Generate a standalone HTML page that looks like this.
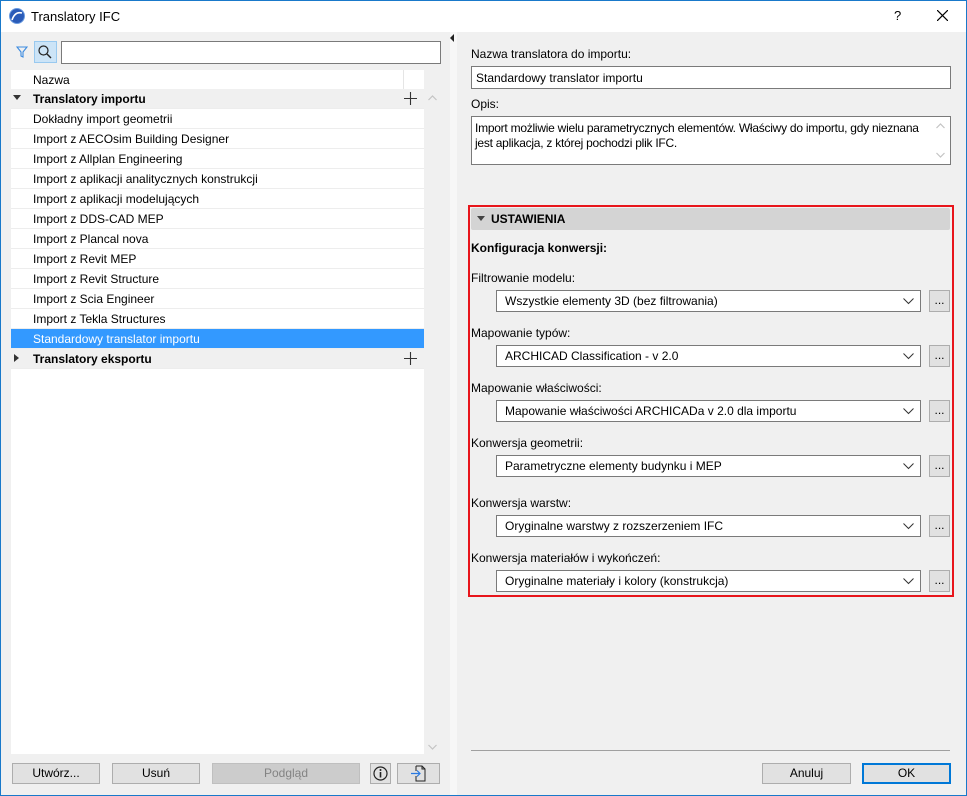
<!DOCTYPE html>
<html><head><meta charset="utf-8"><style>
*{box-sizing:border-box;margin:0;padding:0}
body{width:967px;height:796px;background:#f0f0f0;font-family:"Liberation Sans",sans-serif;font-size:12px;color:#000;position:relative;overflow:hidden}
.a{position:absolute}
.win{left:0;top:0;width:967px;height:796px;border:1px solid #1979ca;}
.title{left:1px;top:1px;width:965px;height:31px;background:#fff}
.list{left:11px;top:70px;width:413px;height:684px;background:#fff}
.row{position:absolute;left:0;width:413px;height:20px;line-height:20px;padding-left:22px;border-bottom:1px solid #ededed;white-space:nowrap}
.grp{background:#f0f0f0;font-weight:bold}
.sel{background:#3399ff;color:#fff}
.btn{position:absolute;height:21px;background:#e1e1e1;border:1px solid #adadad;text-align:center;line-height:19px}
.inp{position:absolute;background:#fff;border:1px solid #7a7a7a}
.lbl{position:absolute;white-space:nowrap}
.combo{position:absolute;left:496px;width:425px;height:22px;background:#fff;border:1px solid #7a7a7a;padding-left:8px;line-height:21px}
.combo svg{position:absolute;right:6px;top:7px}
.dots{position:absolute;left:929px;width:21px;height:22px;background:#e1e1e1;border:1px solid #adadad;text-align:center;line-height:18px}
</style></head><body>
<div class="a title"></div>
<svg class="a" style="left:9px;top:8px" width="16" height="16" viewBox="0 0 16 16"><circle cx="8" cy="8" r="7.5" fill="#2a5bb8"/><path d="M3 12 Q6 3 13 5" stroke="#fff" stroke-width="1.6" fill="none"/><circle cx="8" cy="8" r="7.5" fill="none" stroke="#6a9be0" stroke-width="1"/></svg>
<div class="lbl" style="left:31px;top:9px;font-size:13px">Translatory IFC</div>
<div class="lbl" style="left:894px;top:8px;font-size:13px">?</div>
<svg class="a" style="left:937px;top:10px" width="11" height="11"><path d="M0 0L11 11M11 0L0 11" stroke="#000" stroke-width="1.2"/></svg>

<svg class="a" style="left:16px;top:46px" width="12" height="12"><path d="M1 1H11L7 6V11L5 10V6Z" fill="none" stroke="#3c8be0" stroke-width="1.1"/></svg>
<div class="a" style="left:34px;top:41px;width:23px;height:22px;background:#cce4f7;border:1px solid #99c9ef"></div>
<svg class="a" style="left:37px;top:44px" width="16" height="16"><circle cx="6.5" cy="6.5" r="4.5" fill="none" stroke="#222" stroke-width="1.2"/><path d="M10 10L14 14" stroke="#222" stroke-width="1.4"/></svg>
<div class="inp" style="left:61px;top:41px;width:380px;height:23px"></div>

<div class="a list">
<div class="row" style="top:0;border-bottom:none">Nazwa</div>
<div class="a" style="left:392px;top:0;width:1px;height:19px;background:#e5e5e5"></div>
<div class="row grp" style="top:19px">Translatory importu</div>
<div class="row" style="top:39px">Dokładny import geometrii</div>
<div class="row" style="top:59px">Import z AECOsim Building Designer</div>
<div class="row" style="top:79px">Import z Allplan Engineering</div>
<div class="row" style="top:99px">Import z aplikacji analitycznych konstrukcji</div>
<div class="row" style="top:119px">Import z aplikacji modelujących</div>
<div class="row" style="top:139px">Import z DDS-CAD MEP</div>
<div class="row" style="top:159px">Import z Plancal nova</div>
<div class="row" style="top:179px">Import z Revit MEP</div>
<div class="row" style="top:199px">Import z Revit Structure</div>
<div class="row" style="top:219px">Import z Scia Engineer</div>
<div class="row" style="top:239px">Import z Tekla Structures</div>
<div class="row sel" style="top:259px">Standardowy translator importu</div>
<div class="row grp" style="top:279px">Translatory eksportu</div>
</div>
<svg class="a" style="left:13px;top:95px" width="8" height="6"><path d="M0 0H8L4 5Z" fill="#333"/></svg>
<svg class="a" style="left:14px;top:354px" width="6" height="8"><path d="M0 0V8L5 4Z" fill="#333"/></svg>
<svg class="a" style="left:404px;top:92px" width="13" height="13"><path d="M6.5 0V13M0 6.5H13" stroke="#333" stroke-width="1.1"/></svg>
<svg class="a" style="left:404px;top:352px" width="13" height="13"><path d="M6.5 0V13M0 6.5H13" stroke="#333" stroke-width="1.1"/></svg>
<svg class="a" style="left:428px;top:95px" width="9" height="6"><path d="M0.5 5L4.5 1L8.5 5" fill="none" stroke="#c4c4c4" stroke-width="1.2"/></svg>
<svg class="a" style="left:428px;top:744px" width="9" height="6"><path d="M0.5 1L4.5 5L8.5 1" fill="none" stroke="#c4c4c4" stroke-width="1.2"/></svg>

<div class="btn" style="left:12px;top:763px;width:88px">Utwórz...</div>
<div class="btn" style="left:112px;top:763px;width:88px">Usuń</div>
<div class="btn" style="left:212px;top:763px;width:148px;background:#cccccc;border-color:#bfbfbf;color:#838383">Podgląd</div>
<div class="btn" style="left:370px;top:763px;width:21px"></div>
<svg class="a" style="left:373px;top:766px" width="15" height="15"><circle cx="7.5" cy="7.5" r="6.5" fill="none" stroke="#222" stroke-width="1.2"/><path d="M7.5 6V11.5" stroke="#222" stroke-width="1.6"/><circle cx="7.5" cy="4" r="1" fill="#222"/></svg>
<div class="btn" style="left:397px;top:763px;width:43px"></div>
<svg class="a" style="left:410px;top:765px" width="18" height="17"><path d="M6 1H12L15 4V16H6V11M6 6V1" fill="none" stroke="#222"/><path d="M12 1V4H15" fill="none" stroke="#222"/><path d="M1 8.5H10M7 5.5L10 8.5L7 11.5" fill="none" stroke="#2a7ae2" stroke-width="1.2"/></svg>

<div class="a" style="left:450px;top:32px;width:7px;height:763px;background:#f7f7f7"></div>
<svg class="a" style="left:450px;top:34px" width="5" height="8"><path d="M4 0V8L0 4Z" fill="#222"/></svg>

<div class="lbl" style="left:471px;top:47px">Nazwa translatora do importu:</div>
<div class="inp" style="left:471px;top:66px;width:480px;height:23px;padding-left:4px;line-height:22px">Standardowy translator importu</div>
<div class="lbl" style="left:471px;top:97px">Opis:</div>
<div class="inp" style="left:471px;top:116px;width:480px;height:49px;padding:4px 12px 0 3px;line-height:15px;letter-spacing:-0.25px">Import możliwie wielu parametrycznych elementów. Właściwy do importu, gdy nieznana jest aplikacja, z której pochodzi plik IFC.</div>
<svg class="a" style="left:936px;top:123px" width="9" height="6"><path d="M0.5 5L4.5 1L8.5 5" fill="none" stroke="#c4c4c4" stroke-width="1.2"/></svg>
<svg class="a" style="left:936px;top:152px" width="9" height="6"><path d="M0.5 1L4.5 5L8.5 1" fill="none" stroke="#c4c4c4" stroke-width="1.2"/></svg>

<div class="a" style="left:468px;top:205px;width:486px;height:392px;border:2px solid #e8151b"></div>
<div class="a" style="left:471px;top:208px;width:479px;height:22px;background:#d4d4d4;border-radius:2px"></div>
<svg class="a" style="left:477px;top:216px" width="8" height="5"><path d="M0 0H8L4 5Z" fill="#444"/></svg>
<div class="lbl" style="left:491px;top:212px;font-weight:bold">USTAWIENIA</div>
<div class="lbl" style="left:471px;top:241px;font-weight:bold">Konfiguracja konwersji:</div>

<div class="lbl" style="left:471px;top:271px">Filtrowanie modelu:</div>
<div class="combo" style="top:290px">Wszystkie elementy 3D (bez filtrowania)<svg width="11" height="7"><path d="M0.5 0.5L5.5 5.5L10.5 0.5" fill="none" stroke="#333"/></svg></div>
<div class="dots" style="top:290px">...</div>
<div class="lbl" style="left:471px;top:326px">Mapowanie typów:</div>
<div class="combo" style="top:345px">ARCHICAD Classification - v 2.0<svg width="11" height="7"><path d="M0.5 0.5L5.5 5.5L10.5 0.5" fill="none" stroke="#333"/></svg></div>
<div class="dots" style="top:345px">...</div>
<div class="lbl" style="left:471px;top:381px">Mapowanie właściwości:</div>
<div class="combo" style="top:400px">Mapowanie właściwości ARCHICADa v 2.0 dla importu<svg width="11" height="7"><path d="M0.5 0.5L5.5 5.5L10.5 0.5" fill="none" stroke="#333"/></svg></div>
<div class="dots" style="top:400px">...</div>
<div class="lbl" style="left:471px;top:436px">Konwersja geometrii:</div>
<div class="combo" style="top:455px">Parametryczne elementy budynku i MEP<svg width="11" height="7"><path d="M0.5 0.5L5.5 5.5L10.5 0.5" fill="none" stroke="#333"/></svg></div>
<div class="dots" style="top:455px">...</div>
<div class="lbl" style="left:471px;top:496px">Konwersja warstw:</div>
<div class="combo" style="top:515px">Oryginalne warstwy z rozszerzeniem IFC<svg width="11" height="7"><path d="M0.5 0.5L5.5 5.5L10.5 0.5" fill="none" stroke="#333"/></svg></div>
<div class="dots" style="top:515px">...</div>
<div class="lbl" style="left:471px;top:551px">Konwersja materiałów i wykończeń:</div>
<div class="combo" style="top:570px">Oryginalne materiały i kolory (konstrukcja)<svg width="11" height="7"><path d="M0.5 0.5L5.5 5.5L10.5 0.5" fill="none" stroke="#333"/></svg></div>
<div class="dots" style="top:570px">...</div>

<div class="a" style="left:471px;top:750px;width:479px;height:1px;background:#a0a0a0"></div>
<div class="btn" style="left:762px;top:763px;width:89px">Anuluj</div>
<div class="btn" style="left:862px;top:763px;width:89px;border:2px solid #0078d7;line-height:17px">OK</div>
<div class="a win"></div>
</body></html>
